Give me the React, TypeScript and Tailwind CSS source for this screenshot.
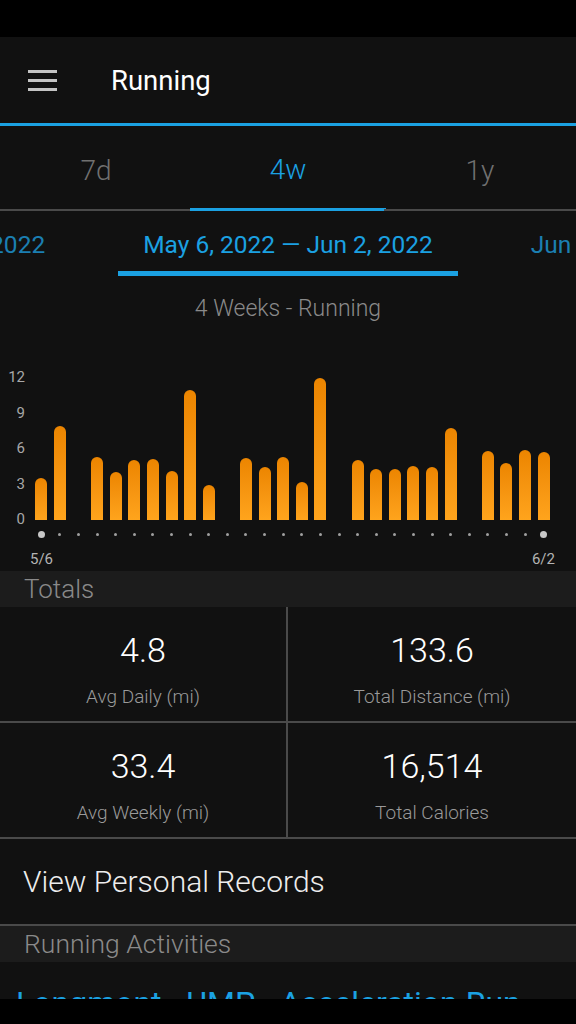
import React from 'react';

const bars = [
  42, 94, 0, 63, 48, 60, 61, 49, 130, 35, 0, 62, 53, 63, 38, 142, 0, 60, 51, 51, 54, 53, 92, 0, 69, 57, 70, 68,
];

const totals = [
  { value: '4.8', label: 'Avg Daily (mi)' },
  { value: '133.6', label: 'Total Distance (mi)' },
  { value: '33.4', label: 'Avg Weekly (mi)' },
  { value: '16,514', label: 'Total Calories' },
];

const App = () => {
  return (
    <div className="w-[576px] h-[1024px] flex flex-col bg-[#111111] overflow-hidden font-['Roboto',sans-serif]">
      {/* status bar */}
      <div className="h-[37px] bg-black shrink-0" />

      <div className="flex-1 overflow-hidden flex flex-col">
        {/* app bar */}
        <div className="h-[86px] shrink-0 flex items-center">
          <div className="ml-[28px] w-[29px] flex flex-col gap-[6px]">
            <span className="block h-[3px] bg-[#c4c4c4]" />
            <span className="block h-[3px] bg-[#c4c4c4]" />
            <span className="block h-[3px] bg-[#c4c4c4]" />
          </div>
          <h1 className="ml-[54px] text-[27.5px] leading-[32px] text-white pt-[1px]">Running</h1>
        </div>
        <div className="h-[3px] bg-[#1ba1e2] shrink-0" />

        {/* range tabs */}
        <div className="grid grid-cols-3 h-[85px] shrink-0">
          <div className="flex items-center justify-center pt-[6px] border-b-2 border-[#4a4a4a] text-[28px] font-light text-[#707070]">7d</div>
          <div className="flex items-center justify-center pt-[6px] border-b-[3px] border-[#1ba1e2] text-[28px] font-light text-[#1ba1e2] mx-[-2px]">4w</div>
          <div className="flex items-center justify-center pt-[6px] border-b-2 border-[#4a4a4a] text-[28px] font-light text-[#707070]">1y</div>
        </div>

        {/* date range picker */}
        <div className="flex justify-center gap-[48px] pt-[20px] shrink-0 whitespace-nowrap">
          <div className="shrink-0 w-[340px] pr-[25px] text-right text-[24.5px] leading-[28px] text-[#1b7fb2]">Apr 8, 2022 — May 5, 2022</div>
          <div className="shrink-0 flex flex-col">
            <div className="px-[25px] text-[24.5px] leading-[28px] text-[#1ba1e2]">May 6, 2022 — Jun 2, 2022</div>
            <div className="mt-[12px] h-[5px] bg-[#1ba1e2]" />
          </div>
          <div className="shrink-0 w-[340px] pl-[25px] text-left text-[24.5px] leading-[28px] text-[#1b7fb2]">Jun 3, 2022 — Jun 30, 2022</div>
        </div>

        <p className="mt-[20px] text-center text-[23px] leading-[26px] font-light text-[#8a8a8a] shrink-0">4 Weeks - Running</p>

        {/* chart */}
        <div className="mt-[38px] h-[211px] shrink-0 flex items-start">
          <div className="w-[32px] pr-[7px] flex flex-col">
            {['12', '9', '6', '3', '0'].map((t) => (
              <div key={t} className="h-[35.5px] flex items-center justify-end text-[15px] leading-none text-[#a8a8a8]">
                {t}
              </div>
            ))}
          </div>
          <div className="w-[521px] flex flex-col">
            <div className="h-[160px] grid grid-cols-[repeat(28,minmax(0,1fr))] items-end">
              {bars.map((h, i) => (
                <div key={i} className="flex justify-center">
                  {h > 0 && (
                    <div
                      className="w-[12px] rounded-t-full bg-linear-to-b from-[#ec8500] to-[#ffa41c]"
                      style={{ height: h }}
                    />
                  )}
                </div>
              ))}
            </div>
            <div className="h-[28px] grid grid-cols-[repeat(28,minmax(0,1fr))] items-center">
              {bars.map((_, i) => (
                <div key={i} className="flex justify-center">
                  {i === 0 || i === bars.length - 1 ? (
                    <span className="block w-[7px] h-[7px] rounded-full bg-[#c8c8c8]" />
                  ) : (
                    <span className="block w-[3px] h-[3px] rounded-full bg-[#a0a0a0]" />
                  )}
                </div>
              ))}
            </div>
            <div className="mt-[2px] ml-[-2px] mr-[-2px] flex justify-between text-[15px] leading-[18px] text-[#b4b4b4]">
              <span>5/6</span>
              <span>6/2</span>
            </div>
          </div>
        </div>

        {/* totals */}
        <div className="h-[36px] shrink-0 bg-[#1c1c1c] flex items-center px-[24px] text-[26px] font-light text-[#8a8a8a]">
          Totals
        </div>
        <div className="grid grid-cols-2 shrink-0">
          {totals.map((t, i) => (
            <div
              key={t.label}
              className={`h-[116px] flex flex-col items-center border-b-2 border-[#4a4a4a] ${i % 2 === 0 ? 'border-r-2' : ''}`}
            >
              <span className="mt-[23px] text-[34px] leading-[40px] font-light text-white">{t.value}</span>
              <span className="mt-[15px] text-[19px] leading-[24px] font-light text-[#9a9a9a]">{t.label}</span>
            </div>
          ))}
        </div>

        <div className="h-[87px] shrink-0 flex items-center px-[23px] border-b-2 border-[#4a4a4a] text-[30px] font-light text-[#ededed]">
          View Personal Records
        </div>

        <div className="h-[36px] shrink-0 bg-[#1c1c1c] flex items-center px-[24px] text-[26.5px] font-light text-[#8a8a8a]">
          Running Activities
        </div>

        <div className="pt-[22px] px-[16px] text-[32px] leading-[38px] text-[#1ba1e2] whitespace-nowrap">
          Longmont - UMP - Acceleration Run
        </div>
      </div>

      {/* nav bar */}
      <div className="h-[25px] bg-black shrink-0" />
    </div>
  );
};

export default App;
